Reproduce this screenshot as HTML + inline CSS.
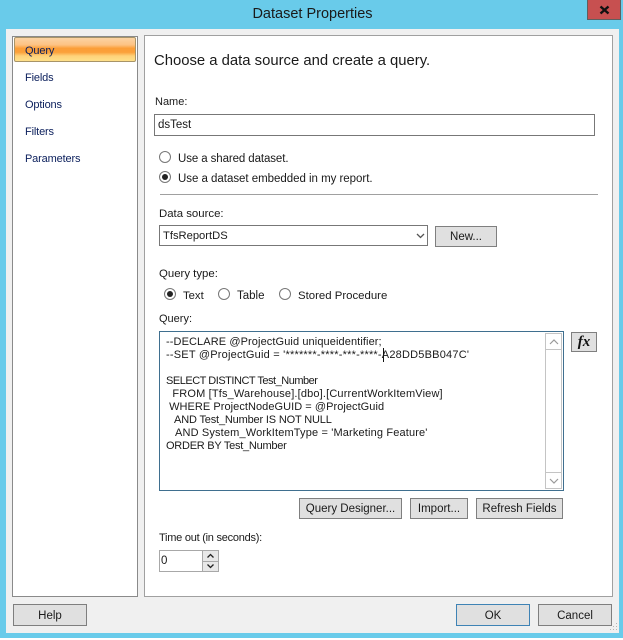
<!DOCTYPE html>
<html><head><meta charset="utf-8"><style>
html,body{margin:0;padding:0;width:623px;height:640px;overflow:hidden;background:#fff}
body{position:relative;font-family:"Liberation Sans",sans-serif;font-size:11px;color:#1a1a1a}
div,span{position:absolute;box-sizing:border-box;white-space:pre}
.t{line-height:14px;height:14px}
.nav{color:#0b1f5c;left:25px;line-height:14px;font-size:11px;letter-spacing:-.15px}
.btn{background:#e0e0e0;border:1px solid #7f7f7f;text-align:center;line-height:21px;font-size:11.5px;color:#1a1a1a}
.q{left:166px;font-size:11px;line-height:13px;height:13px;color:#1a1a1a}
.r{width:12px;height:12px;border:1px solid #777;border-radius:50%;background:#fff}
.r.c::after{content:"";position:absolute;left:2px;top:2px;width:6px;height:6px;border-radius:50%;background:#222}
</style></head><body>
<div style="left:0;top:0;width:623px;height:638px;background:#69cbea"></div>
<div style="left:587px;top:0;width:34px;height:20px;background:#c75050;border:1px solid #5f5f5f;border-top:0"></div>
<svg style="position:absolute;left:599px;top:5px" width="11" height="10"><path d="M1.500 1.500L9.500 8.500M9.500 1.500L1.500 8.500" stroke="#111" stroke-width="2.400"/></svg>
<div class="t" style="left:1px;top:6px;width:623px;text-align:center;font-size:14.500px;line-height:16px;height:16px;color:#1a1a1a">Dataset Properties</div>
<div style="left:6px;top:29px;width:613px;height:604px;background:#f0f0f0"></div>
<div style="left:12px;top:36px;width:126px;height:561px;background:#fff;border:1px solid #8a8a8a"></div>
<div style="left:144px;top:35px;width:469px;height:562px;background:#fff;border:1px solid #a0a0a0"></div>
<div style="left:14px;top:37px;width:122px;height:25px;border:1px solid #a89468;border-radius:2px;background:linear-gradient(#fbd3a4 0,#fdc283 30%,#fb9e38 45%,#fba03a 62%,#fed27a 78%,#fee08a 100%)"></div>
<div class="nav" style="top:44px">Query</div>
<div class="nav" style="top:71px">Fields</div>
<div class="nav" style="top:98px">Options</div>
<div class="nav" style="top:125px">Filters</div>
<div class="nav" style="top:152px">Parameters</div>

<div class="t" style="left:154px;top:52px;font-size:14.850px;line-height:18px;height:18px">Choose a data source and create a query.</div>
<div class="t" style="left:155px;top:95px;font-size:11px">Name:</div>
<div style="left:154px;top:114px;width:441px;height:22px;border:1px solid #777;background:#fff"></div>
<div class="t" style="left:158px;top:118px;font-size:11.500px">dsTest</div>
<div class="r" style="left:159px;top:151px"></div>
<div class="t" style="left:178px;top:152px;font-size:11.500px;letter-spacing:-.1px">Use a shared dataset.</div>
<div class="r c" style="left:159px;top:171px"></div>
<div class="t" style="left:178px;top:172px;font-size:11.500px;letter-spacing:-.03px">Use a dataset embedded in my report.</div>
<div style="left:160px;top:194px;width:438px;height:1px;background:#a0a0a0"></div>
<div class="t" style="left:159px;top:207px;font-size:11.400px">Data source:</div>
<div style="left:159px;top:225px;width:269px;height:21px;border:1px solid #777;background:#fff"></div>
<div class="t" style="left:163px;top:229px;font-size:11.200px">TfsReportDS</div>
<svg style="position:absolute;left:416px;top:233px" width="9" height="6"><path d="M1 1L4.500 4.500L8 1" fill="none" stroke="#555" stroke-width="1.300"/></svg>
<div class="btn" style="left:435px;top:226px;width:62px;height:21px">New...</div>
<div class="t" style="left:159px;top:267px;font-size:11.400px">Query type:</div>
<div class="r c" style="left:164px;top:288px"></div>
<div class="t" style="left:183px;top:289px;font-size:11.300px">Text</div>
<div class="r" style="left:218px;top:288px"></div>
<div class="t" style="left:237px;top:289px;font-size:11.500px">Table</div>
<div class="r" style="left:279px;top:288px"></div>
<div class="t" style="left:298px;top:289px;font-size:11.400px">Stored Procedure</div>
<div class="t" style="left:159px;top:312px;font-size:11px">Query:</div>
<div style="left:159px;top:331px;width:405px;height:160px;border:1px solid #3f6f8f;background:#fff"></div>
<div style="left:545px;top:333px;width:17px;height:156px;border:1px solid #c4c4c4;background:#fff"></div>
<div style="left:545px;top:333px;width:17px;height:17px;border:1px solid #c4c4c4"></div>
<div style="left:545px;top:472px;width:17px;height:17px;border:1px solid #c4c4c4"></div>
<svg style="position:absolute;left:549px;top:339px" width="10" height="6"><path d="M1 5L5 1L9 5" fill="none" stroke="#999" stroke-width="1.200"/></svg>
<svg style="position:absolute;left:549px;top:478px" width="10" height="6"><path d="M1 1L5 5L9 1" fill="none" stroke="#999" stroke-width="1.200"/></svg>
<div class="q" style="top:336px;letter-spacing:.1px">--DECLARE @ProjectGuid uniqueidentifier;</div>
<div class="q" style="top:349px;letter-spacing:.21px">--SET @ProjectGuid = '*******-****-***-****-A28DD5BB047C'</div>
<div style="left:383px;top:348px;width:1px;height:14px;background:#111"></div>
<div class="q" style="top:375px;letter-spacing:-.48px">SELECT DISTINCT Test_Number</div>
<div class="q" style="top:388px;letter-spacing:.16px">  FROM [Tfs_Warehouse].[dbo].[CurrentWorkItemView]</div>
<div class="q" style="top:401px;letter-spacing:.05px"> WHERE ProjectNodeGUID = @ProjectGuid</div>
<div class="q" style="top:414px;letter-spacing:-.17px">   AND Test_Number IS NOT NULL</div>
<div class="q" style="top:427px;letter-spacing:.15px">   AND System_WorkItemType = 'Marketing Feature'</div>
<div class="q" style="top:440px;letter-spacing:-.25px">ORDER BY Test_Number</div>
<div class="btn" style="left:571px;top:332px;width:26px;height:20px;font-family:'Liberation Serif',serif;font-style:italic;font-weight:bold;font-size:15px;line-height:18px;color:#111">fx</div>
<div class="btn" style="left:299px;top:498px;width:103px;height:21px">Query Designer...</div>
<div class="btn" style="left:410px;top:498px;width:58px;height:21px">Import...</div>
<div class="btn" style="left:476px;top:498px;width:87px;height:21px">Refresh Fields</div>
<div class="t" style="left:159px;top:531px;font-size:11px;letter-spacing:-.25px">Time out (in seconds):</div>
<div style="left:159px;top:550px;width:60px;height:22px;border:1px solid #a8a8a8;background:#fff"></div>
<div class="t" style="left:161px;top:554px;font-size:11.500px">0</div>
<div style="left:202px;top:550px;width:17px;height:22px;background:#a8a8a8"></div>
<div style="left:203px;top:551px;width:15px;height:10px;background:#e8e8e8"></div>
<div style="left:203px;top:562px;width:15px;height:9px;background:#e8e8e8"></div>
<svg style="position:absolute;left:206px;top:553px" width="9" height="6"><path d="M1.500 4.500L4.500 1.500L7.500 4.500" fill="none" stroke="#222" stroke-width="1.300"/></svg>
<svg style="position:absolute;left:206px;top:563px" width="9" height="6"><path d="M1.500 1.500L4.500 4.500L7.500 1.500" fill="none" stroke="#222" stroke-width="1.300"/></svg>
<div class="btn" style="left:13px;top:604px;width:74px;height:22px;line-height:22px">Help</div>
<div class="btn" style="left:456px;top:604px;width:74px;height:22px;line-height:22px;border-color:#3f83b5">OK</div>
<div class="btn" style="left:538px;top:604px;width:74px;height:22px;line-height:22px">Cancel</div>
<svg style="position:absolute;left:610px;top:622px" width="9" height="10"><path d="M6 1h1v1h-1zM6 4h1v1h-1zM3 4h1v1h-1zM6 7h1v1h-1zM3 7h1v1h-1zM0 7h1v1h-1z" fill="#b4b4b4"/></svg>
</body></html>
